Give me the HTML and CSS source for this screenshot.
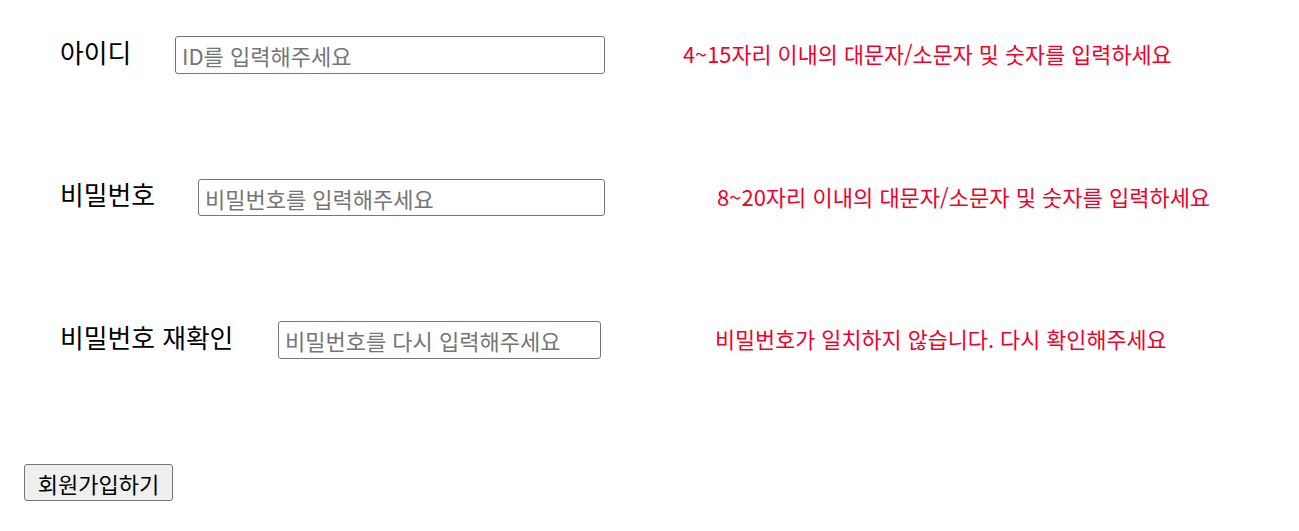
FILE: index.html
```html
<!DOCTYPE html>
<html lang="ko">
<head>
<meta charset="utf-8">
<link rel="stylesheet" href="styles.css">
</head>
<body>
<form class="form">
  <div class="row row-id">
    <label class="label">아이디</label>
    <input class="field field-id" type="text" placeholder="ID를 입력해주세요">
    <span class="error err-id">4~15자리 이내의 대문자/소문자 및 숫자를 입력하세요</span>
  </div>
  <div class="row row-pw">
    <label class="label">비밀번호</label>
    <input class="field field-pw" type="password" placeholder="비밀번호를 입력해주세요">
    <span class="error err-pw">8~20자리 이내의 대문자/소문자 및 숫자를 입력하세요</span>
  </div>
  <div class="row row-pw2">
    <label class="label">비밀번호 재확인</label>
    <input class="field field-pw2" type="password" placeholder="비밀번호를 다시 입력해주세요">
    <span class="error err-pw2">비밀번호가 일치하지 않습니다. 다시 확인해주세요</span>
  </div>
  <button class="submit" type="button">회원가입하기</button>
</form>
</body>
</html>
```
FILE: styles.css
```css
* { box-sizing: border-box; }
body {
  margin: 0;
  background: #fff;
  font-family: "Noto Sans CJK KR", "Noto Sans", sans-serif;
}
.form {
  display: flex;
  flex-direction: column;
  padding: 36px 0 0 24px;
}
.row {
  display: flex;
  align-items: center;
  height: 38px;
  padding-left: 36px;
}
.row-id { margin-bottom: 105px; }
.row-pw { margin-bottom: 105px; height: 37px; }
.row-pw2 { margin-bottom: 105px; }
.label {
  font-size: 25.8px;
  color: #000;
  white-space: nowrap;
  margin-top: -8px;
}
.field {
  height: 38px;
  border: 1px solid #767676;
  border-radius: 3px;
  padding: 0 6px;
  font-family: inherit;
  font-size: 22px;
  color: #000;
  background: #fff;
}
.field::placeholder { color: #757575; }
.field-id { width: 430px; }
.field-pw { width: 407px; height: 37px; }
.field-pw2 { width: 323px; }
.row-id .label { width: 115px; }
.row-pw .label { width: 138px; }
.row-pw2 .label { width: 218px; }
.error {
  color: #f0002a;
  font-size: 21.8px;
  white-space: nowrap;
  margin-top: -4px;
}
.err-id { margin-left: 78px; }
.err-pw { margin-left: 112px; font-size: 22px; }
.err-pw2 { margin-left: 114px; }
.submit {
  align-self: flex-start;
  margin-top: 0;
  height: 37px;
  width: 149px;
  padding: 0;
  font-family: inherit;
  font-size: 22px;
  color: #000;
  background: #efefef;
  border: 1px solid #767676;
  border-radius: 3px;
}
```
